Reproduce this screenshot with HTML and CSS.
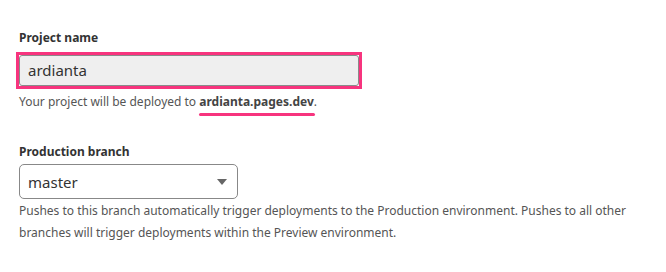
FILE: index.html
```html
<!DOCTYPE html>
<html>
<head>
<meta charset="utf-8">
<link rel="stylesheet" href="styles.css">
</head>
<body>
<div class="form">
  <div class="field">
    <label class="label">Project name</label>
    <div class="highlight">
      <div class="input">ardianta</div>
    </div>
    <p class="help">Your project will be deployed to <span class="domain">ardianta.pages.dev</span>.</p>
  </div>
  <div class="field second">
    <label class="label">Production branch</label>
    <div class="select">
      <span>master</span>
      <svg class="caret" width="10" height="6" viewBox="0 0 10 6"><path d="M0 0H10L5 6Z" fill="#666"/></svg>
    </div>
    <p class="help small">Pushes to this branch automatically trigger deployments to the Production environment. Pushes to all other branches will trigger deployments within the Preview environment.</p>
  </div>
</div>
</body>
</html>
```
FILE: styles.css
```css
* { box-sizing: border-box; }
html, body { margin: 0; padding: 0; background: #fff; }
body { font-family: "Noto Sans", "Open Sans", sans-serif; color: #333; }
.form { padding: 29px 19px 0 19px; }
.field { display: flex; flex-direction: column; align-items: flex-start; }
.second { margin-top: 31px; }
.label { font-size: 12px; font-weight: 700; color: #333; line-height: 18px; }
.highlight { margin: 5px 0 0 -3px; border: 3px solid #f7347e; }
.input { width: 340px; height: 31px; background: #efefef; border: 1px solid #8a8a8a; border-radius: 3px; font-size: 15px; line-height: 29px; padding-left: 8px; color: #333; }
.help { margin: 3px 0 0 0; font-size: 12px; line-height: 20px; color: #555; }
.domain { font-weight: 700; color: #444; position: relative; }
.domain::after { content: ""; position: absolute; left: 0; right: -1px; bottom: -6px; height: 3px; border-radius: 2px; background: #f7347e; }
.select { margin-top: 3px; width: 219px; height: 35px; border: 1px solid #888; border-radius: 5px; display: flex; align-items: center; justify-content: space-between; padding: 0 10px 0 8px; font-size: 15px; color: #333; }
.small { margin-top: 1px; font-size: 12px; line-height: 22px; max-width: 620px; }
```
